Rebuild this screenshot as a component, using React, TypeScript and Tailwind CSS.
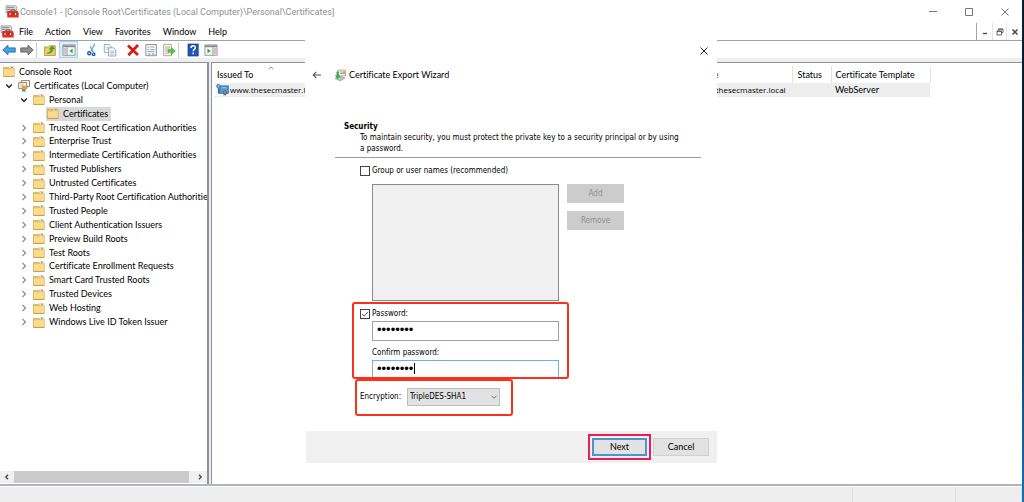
import React from "react";

const TREE = [
  "Trusted Root Certification Authorities",
  "Enterprise Trust",
  "Intermediate Certification Authorities",
  "Trusted Publishers",
  "Untrusted Certificates",
  "Third-Party Root Certification Authorities",
  "Trusted People",
  "Client Authentication Issuers",
  "Preview Build Roots",
  "Test Roots",
  "Certificate Enrollment Requests",
  "Smart Card Trusted Roots",
  "Trusted Devices",
  "Web Hosting",
  "Windows Live ID Token Issuer",
];

const MENUS = ["File", "Action", "View", "Favorites", "Window", "Help"];

function ConsoleIcon() {
  return (
    <svg viewBox="0 0 14 13" className="h-[13px] w-[14px] shrink-0" aria-hidden="true">
      <path d="M1 .8h9.500l1.200 1v6H1z" fill="#d9dcde" stroke="#8b8f93" strokeWidth=".7" />
      <path d="M2 2.600h7M2 4.600h3.500" stroke="#6f7478" strokeWidth=".8" />
      <path d="M6 6.200V4.900h4v1.300" fill="none" stroke="#5d2020" strokeWidth=".9" />
      <path d="M2.300 6h10.400l.9 2v4.600H2.300z" fill="#dd3023" />
      <path d="M2.300 8.900h11.300" stroke="#9a1d15" strokeWidth=".7" />
      <path d="M5.200 8.100v1.800M10.600 8.100v1.800" stroke="#fff" strokeWidth="1.100" />
    </svg>
  );
}

function FolderIcon() {
  return (
    <svg viewBox="0 0 12 11" className="h-[11px] w-[12px] shrink-0" aria-hidden="true">
      <path d="M.5 1.400h5l.8 1h4.900v8H.5z" fill="#e9bd58" stroke="#c99a3e" strokeWidth=".6" />
      <path d="M.9 3.200h5.200l.8-1h4v7.900H.9z" fill="#fbdc8b" />
      <path d="M6.600.5h3.600v2.200H6.600z" fill="#f7f3e6" stroke="#c99a3e" strokeWidth=".4" />
      <path d="M8 1h1.600v1.200H8z" fill="#5f9fd0" />
      <path d="M.5 10.400h10.800" stroke="#c4963c" strokeWidth=".8" />
    </svg>
  );
}

function CertsIcon() {
  return (
    <svg viewBox="0 0 12 12" className="h-[12px] w-[12px] shrink-0" aria-hidden="true">
      <path d="M3.500.6h8v6h-8z" fill="#fff" stroke="#8a7355" strokeWidth=".9" />
      <path d="M.7 2.600h8v6h-8z" fill="#fdfbf5" stroke="#8a7355" strokeWidth=".9" />
      <path d="M2 4.300h4M2 5.800h3" stroke="#b9b4a8" strokeWidth=".7" />
      <path d="M4.200 8.400v3.500l1.500-1 1.700 1V8.400z" fill="#2f7fcb" />
      <circle cx="5.800" cy="7.400" r="2.200" fill="#efa022" />
    </svg>
  );
}

function CertRowIcon() {
  return (
    <svg viewBox="0 0 13 12" className="h-[12px] w-[13px] shrink-0" aria-hidden="true">
      <path d="M3 1.800h9.400v7.600H3z" fill="#4d9ddb" stroke="#2d6c9f" strokeWidth=".8" />
      <path d="M5.400 3.800h5" stroke="#a6d4f4" strokeWidth=".8" />
      <circle cx="2.400" cy="2.200" r="1.800" fill="#7ec0ea" stroke="#35617f" strokeWidth=".8" />
      <path d="M2.400 4v5.400M2.400 6h1.600M2.400 8h1.600" stroke="#35617f" strokeWidth=".9" />
      <path d="M7.600 9.200v2.600l1.300-.8 1.300.8V9.200z" fill="#2f5f88" />
      <circle cx="8.900" cy="8.400" r="1.800" fill="#8d8a6a" stroke="#4b5a58" strokeWidth=".5" />
    </svg>
  );
}

function Chevron({ open }: { open?: boolean }) {
  return (
    <svg viewBox="0 0 8 8" className="h-2 w-2 shrink-0" fill="none" aria-hidden="true">
      {open ? (
        <path d="M1.200 2.600 4 5.400l2.800-2.800" stroke="#222" strokeWidth="1.400" />
      ) : (
        <path d="M2.500 1 5.500 4l-3 3" stroke="#8c8c8c" strokeWidth="1.200" />
      )}
    </svg>
  );
}

function ToolButton({ label, active, children }: { label: string; active?: boolean; children: React.ReactNode }) {
  return (
    <button
      type="button"
      aria-label={label}
      className={
        active
          ? "flex h-[17px] w-[19px] items-center justify-center border border-[#a3d5f5] bg-[#d9edfa]"
          : "flex h-[17px] w-[18px] items-center justify-center"
      }
    >
      <svg viewBox="0 0 14 14" className="h-[14px] w-[14px] shrink-0" fill="none" aria-hidden="true">
        {children}
      </svg>
    </button>
  );
}

function Separator() {
  return <span className="h-4 w-px bg-[#cfcfcf]" />;
}

function Toolbar() {
  return (
    <div className="flex h-[17px] shrink-0 items-center bg-white">
      <ToolButton label="Back">
        <path d="M.8 7 6 2.300v2.600h7.200v4.200H6v2.600z" fill="#40a4e8" stroke="#1b6fae" strokeWidth=".9" />
      </ToolButton>
      <ToolButton label="Forward">
        <path d="M13.200 7 8 2.300v2.600H.8v4.200H8v2.600z" fill="#8f8f8f" stroke="#5f5f5f" strokeWidth=".9" />
      </ToolButton>
      <Separator />
      <div className="flex items-center pl-1">
        <ToolButton label="Up one level">
          <path d="M1.500 4h4l1-1.200h5.800v9.700H1.500z" fill="#f0c96a" stroke="#b98d34" strokeWidth=".8" />
          <path d="M4 10.200c2.700-.3 3.900-2 3.900-4H6.200L9 2.800 11.600 6H9.800c0 3-2 4.600-5.800 4.200z" fill="#3cae2e" stroke="#22801a" strokeWidth=".4" />
        </ToolButton>
        <ToolButton label="Show console tree" active>
          <path d="M.9 1.900h12.200v10.400H.9z" fill="#f5f5f5" stroke="#85888c" strokeWidth=".8" />
          <path d="M1 3.300h12" stroke="#85888c" strokeWidth="1.800" />
          <path d="M1.600 6h2.600M1.600 8h2.600M1.600 10h2.600M5 4.500v7.800" stroke="#8d9094" strokeWidth=".9" />
          <path d="M10.600 5.700v4.600L7.400 8z" fill="#3a9c2e" />
        </ToolButton>
      </div>
      <div className="flex items-center pl-[5px]">
        <ToolButton label="Cut">
          <path d="M9.800.8 6 8.400M5 3l3.200 6" stroke="#6fa6d6" strokeWidth="1.300" />
          <circle cx="4.200" cy="10.300" r="1.500" stroke="#1d5fa5" strokeWidth="1.400" />
          <circle cx="8.600" cy="11.200" r="1.300" stroke="#1d5fa5" strokeWidth="1.400" />
        </ToolButton>
        <ToolButton label="Copy">
          <path d="M1.300 1.500h5l2 2v6h-7z" fill="#fff" stroke="#8d99a6" strokeWidth=".8" />
          <path d="M2.500 4.200h4M2.500 6h4" stroke="#9fb6cd" strokeWidth=".7" />
          <path d="M5.600 4.800h5l2.200 2.200v6H5.600z" fill="#fff" stroke="#7c8fa5" strokeWidth=".8" />
          <path d="M7 8h4.300M7 9.600h4.300M7 11.200h4.300" stroke="#7ea6cf" strokeWidth=".7" />
        </ToolButton>
      </div>
      <div className="flex items-center pl-[5px]">
        <ToolButton label="Delete">
          <path d="m2 2.600 10 9.400M12 2 2.400 12.200" stroke="#d31f16" strokeWidth="2.800" />
        </ToolButton>
        <ToolButton label="Properties">
          <path d="M1.800 1.500h10.600v11.200H1.800z" fill="#f6f6f6" stroke="#85888c" strokeWidth=".9" />
          <path d="M3.500 4h2M6.500 4h4M3.500 6.500h2M6.500 6.500h4M3.500 8.500h7" stroke="#8cabc8" strokeWidth="1" />
          <path d="M4 11h2.500M8 11h2.500" stroke="#777" strokeWidth=".9" />
        </ToolButton>
        <ToolButton label="Export list">
          <path d="M1.600 1.300h7.800v11.400H1.600z" fill="#fdfbe9" stroke="#9a9786" strokeWidth=".8" />
          <path d="M3 4h5M3 6h5M3 8h3M3 10.300h4" stroke="#999" strokeWidth=".8" />
          <path d="M6 6.800h3.400V4.600L13.400 8l-4 3.400V9.200H6z" fill="#5fc343" stroke="#359522" strokeWidth=".5" />
        </ToolButton>
      </div>
      <Separator />
      <div className="flex items-center pl-[5px]">
        <ToolButton label="Help">
          <rect x="2" y="1" width="10.200" height="12" fill="#2457b5" stroke="#173b80" strokeWidth=".7" />
          <path d="M5 5c0-3 4.400-2.900 4.400-.4C9.400 6.400 7.200 6.300 7.200 8.300M7.200 9.600v1.700" stroke="#fff" strokeWidth="1.400" />
        </ToolButton>
        <ToolButton label="Show action pane">
          <path d="M.9 1.900h12.200v10.400H.9z" fill="#f5f5f5" stroke="#85888c" strokeWidth=".8" />
          <path d="M1 3.300h12" stroke="#85888c" strokeWidth="1.800" />
          <path d="M10 6h2.400M10 8h2.400M10 10h2.400M9 4.500v7.800" stroke="#8d9094" strokeWidth=".9" />
          <path d="M3.500 5.700v4.600L6.700 8z" fill="#3a9c2e" />
        </ToolButton>
      </div>
    </div>
  );
}

function TitleBar() {
  return (
    <header className="flex h-[23px] shrink-0 items-center bg-white pl-[5px] pr-3">
      <ConsoleIcon />
      <h1 className="flex-1 whitespace-nowrap pl-px font-[Roboto,sans-serif] text-[9px] leading-3 text-[#8f8f8f]">
        Console1 - [Console Root\Certificates (Local Computer)\Personal\Certificates]
      </h1>
      <div className="flex items-center gap-[26px] text-[#777]">
        <button type="button" aria-label="Minimize" className="h-[10px] w-[10px]">
          <svg viewBox="0 0 10 10" className="h-full w-full" aria-hidden="true">
            <path d="M1 4.500h8" stroke="currentColor" />
          </svg>
        </button>
        <button type="button" aria-label="Maximize" className="h-[10px] w-[10px]">
          <svg viewBox="0 0 10 10" className="h-full w-full" aria-hidden="true">
            <path d="M1.500 1.500h7v7h-7z" fill="none" stroke="currentColor" />
          </svg>
        </button>
        <button type="button" aria-label="Close" className="h-[10px] w-[10px]">
          <svg viewBox="0 0 10 10" className="h-full w-full" aria-hidden="true">
            <path d="m1.500 1.500 7 7m0-7-7 7" stroke="currentColor" />
          </svg>
        </button>
      </div>
    </header>
  );
}

function MenuBar() {
  return (
    <div className="flex h-[18px] shrink-0 items-stretch border-b border-[#a3a3a3] bg-white">
      <nav className="flex flex-1 items-center">
        <ConsoleIcon />
        <div className="flex gap-3 pl-[5px] text-[9px] leading-3 text-black">
          {MENUS.map((m) => (
            <button key={m} type="button">
              {m}
            </button>
          ))}
        </div>
      </nav>
      <div className="flex border-l border-[#a3a3a3] text-[#445]">
        <button type="button" aria-label="Minimize child window" className="flex w-[15px] items-center justify-center">
          <svg viewBox="0 0 8 8" className="h-2 w-2" aria-hidden="true">
            <path d="M2 5.500h4" stroke="currentColor" strokeWidth="1.300" />
          </svg>
        </button>
        <button
          type="button"
          aria-label="Restore child window"
          className="flex w-[15px] items-center justify-center border-x border-[#e3e3e3]"
        >
          <svg viewBox="0 0 8 8" className="h-2 w-2" fill="none" aria-hidden="true">
            <path d="M2.500 2.500V1H7v3.500H5.500M1 3h4.500v4H1z" stroke="currentColor" strokeWidth=".8" />
            <path d="M2.500 1.300H7M1 3.400h4.500" stroke="currentColor" strokeWidth=".8" />
          </svg>
        </button>
        <button type="button" aria-label="Close child window" className="flex w-[15px] items-center justify-center">
          <svg viewBox="0 0 8 8" className="h-2 w-2" aria-hidden="true">
            <path d="m1.500 1.500 5 5m0-5-5 5" stroke="currentColor" strokeWidth="1.500" />
          </svg>
        </button>
      </div>
    </div>
  );
}

function TreePane() {
  return (
    <aside className="flex w-[209px] shrink-0 flex-col border-r-2 border-t border-[#8d939c] bg-white">
      <ul className="grid h-[266px] auto-rows-fr overflow-hidden whitespace-nowrap pt-[2px] text-[9px] leading-3 text-black">
        <li className="flex items-center gap-1 pl-[3px]">
          <FolderIcon />
          Console Root
        </li>
        <li className="flex items-center pl-[5px]">
          <Chevron open />
          <span className="flex items-center gap-1 pl-[5px]">
            <CertsIcon />
            Certificates (Local Computer)
          </span>
        </li>
        <li className="flex items-center pl-5">
          <Chevron open />
          <span className="flex items-center gap-1 pl-[5px]">
            <FolderIcon />
            Personal
          </span>
        </li>
        <li className="flex items-center pl-[46px]">
          <span className="flex items-center gap-1 bg-[#d9d9d9] pl-px pr-[3px]">
            <FolderIcon />
            <span className="leading-[14px]">Certificates</span>
          </span>
        </li>
        {TREE.map((name) => (
          <li key={name} className="flex items-center pl-5">
            <Chevron />
            <span className="flex items-center gap-1 pl-[5px]">
              <FolderIcon />
              {name}
            </span>
          </li>
        ))}
      </ul>
      <div className="mb-px mt-auto flex h-3 items-stretch bg-[#f0f0f0]">
        <button type="button" aria-label="Scroll left" className="flex w-[14px] items-center justify-center">
          <svg viewBox="0 0 8 8" className="h-2 w-2" fill="none" aria-hidden="true">
            <path d="M5 1.800 2.800 4 5 6.200" stroke="#444" strokeWidth="1.300" />
          </svg>
        </button>
        <span className="flex-1 bg-[#cbcbcb]" />
        <button type="button" aria-label="Scroll right" className="flex w-[18px] items-center justify-center pl-1">
          <svg viewBox="0 0 8 8" className="h-2 w-2" fill="none" aria-hidden="true">
            <path d="M3 1.800 5.200 4 3 6.200" stroke="#444" strokeWidth="1.300" />
          </svg>
        </button>
      </div>
    </aside>
  );
}

function ListPane() {
  return (
    <section className="min-w-0 flex-1 overflow-hidden border-l border-t border-[#8d939c] bg-white pl-px pt-[3px]">
      <table className="w-[717px] table-fixed border-collapse text-left text-[9px] leading-3 text-black">
        <colgroup>
          <col className="w-[115px]" />
          <col className="w-[358px]" />
          <col className="w-[106px]" />
          <col className="w-[39px]" />
          <col className="w-[99px]" />
        </colgroup>
        <thead>
          <tr className="h-[17px] whitespace-nowrap">
            <th className="relative px-1 pt-px font-normal">
              Issued To
              <svg viewBox="0 0 8 4" className="absolute left-1/2 top-0 h-1 w-2 -translate-x-1/2" fill="none" aria-hidden="true">
                <path d="M1.500 3.200 4 1l2.500 2.200" stroke="#777" strokeWidth=".8" />
              </svg>
            </th>
            <th />
            <th className="border-r border-[#e3e3e3] px-[9px] pt-px font-normal">Name</th>
            <th className="border-r border-[#e3e3e3] px-[5px] pt-px font-normal">Status</th>
            <th className="border-r border-[#e3e3e3] px-1 pt-px font-normal">Certificate Template</th>
          </tr>
        </thead>
        <tbody>
          <tr className="h-[14px] whitespace-nowrap bg-[#eee]">
            <td className="p-0">
              <span className="flex items-center">
                <span className="bg-white pl-[3px]">
                  <CertRowIcon />
                </span>
                <span className="pl-px font-['Open_Sans',sans-serif] text-[8px]">www.thesecmaster.local</span>
              </span>
            </td>
            <td />
            <td className="px-[9px] font-['Open_Sans',sans-serif] text-[8px]">www.thesecmaster.local</td>
            <td />
            <td className="px-1">WebServer</td>
          </tr>
        </tbody>
      </table>
    </section>
  );
}

function CheckBox({ id, label, checked }: { id: string; label: string; checked?: boolean }) {
  return (
    <div className="flex items-center gap-[2px]">
      <span className="relative h-[10px] w-[10px]">
        <input
          id={id}
          type="checkbox"
          defaultChecked={checked}
          className="peer block h-[10px] w-[10px] appearance-none border border-[#444] bg-white"
        />
        <svg
          viewBox="0 0 10 10"
          className="pointer-events-none absolute inset-0 hidden h-[10px] w-[10px] peer-checked:block"
          fill="none"
          aria-hidden="true"
        >
          <path d="m2 5 2 2.200 4-4.400" stroke="#444" strokeWidth=".9" />
        </svg>
      </span>
      <label htmlFor={id}>{label}</label>
    </div>
  );
}

function ExportWizard() {
  return (
    <div
      role="dialog"
      aria-labelledby="wizard-title"
      className="absolute left-[305px] top-10 flex w-[412px] flex-col bg-white text-black"
    >
      <div className="flex h-[22px] items-center justify-end pr-2">
        <button type="button" aria-label="Close wizard" className="h-[10px] w-[10px]">
          <svg viewBox="0 0 10 10" className="h-full w-full" aria-hidden="true">
            <path d="m1.500 1.500 7 7m0-7-7 7" stroke="#222" />
          </svg>
        </button>
      </div>
      <div className="flex h-[26px] items-center pl-[7px]">
        <button type="button" aria-label="Previous page" className="h-[10px] w-[10px]">
          <svg viewBox="0 0 10 10" className="h-full w-full" fill="none" aria-hidden="true">
            <path d="M9 5H1.200M4.300 1.900 1.200 5l3.100 3.100" stroke="#555" strokeWidth="1.100" />
          </svg>
        </button>
        <svg viewBox="0 0 13 13" className="ml-3 h-[13px] w-[13px]" aria-hidden="true">
          <path d="M4 1h7.500v6H4z" fill="#f2f3f4" stroke="#8b9096" strokeWidth=".7" />
          <path d="M6 3h4M6 4.500h4" stroke="#6b8fb8" strokeWidth=".7" />
          <path d="M1 9.500 7 7.500l4 1.500-5 3z" fill="#b9bec4" stroke="#7c828a" strokeWidth=".5" />
          <path d="M2.500 2.500h2.300v4h1.700L3.600 10 .8 6.500h1.700z" fill="#35b030" />
          <circle cx="10.200" cy="3.800" r="1.500" fill="#f0a726" />
        </svg>
        <h2 id="wizard-title" className="pl-[2px] text-[9px] leading-3">
          Certificate Export Wizard
        </h2>
      </div>
      <div className="flex flex-col pt-[33px] font-['DejaVu_Sans_Condensed','DejaVu_Sans',sans-serif] text-[8px] leading-[11px]">
        <div className="ml-[30px] mr-4 border-b border-[#9b9b9b] pb-[3px] pl-[9px]">
          <h3 className="font-bold">Security</h3>
          <p className="pl-4">
            To maintain security, you must protect the private key to a security principal or by using
            <br />a password.
          </p>
        </div>
        <form className="flex flex-col" onSubmit={(e) => e.preventDefault()}>
          <div className="pl-[55px] pt-[7px]">
            <CheckBox id="group" label="Group or user names (recommended)" />
            <div className="flex gap-2 pl-3 pt-2">
              <select
                multiple
                disabled
                aria-label="Group or user names"
                className="h-[117px] w-[187px] appearance-none border border-[#8a8a92] bg-[#f0f0f0]"
              />
              <div className="flex flex-col gap-2 text-[#8f8f8f]">
                <button type="button" disabled className="h-[19px] w-[57px] bg-[#cccccc]">
                  Add
                </button>
                <button type="button" disabled className="h-[19px] w-[57px] bg-[#cccccc]">
                  Remove
                </button>
              </div>
            </div>
          </div>
          <div className="relative ml-[47px] mt-px flex h-[77px] w-[217px] flex-col pl-2 pt-[6px]">
            <CheckBox id="use-password" label="Password:" checked />
            <input
              type="password"
              aria-label="Password"
              defaultValue="password"
              className="ml-3 mt-[2px] h-[20px] w-[187px] border border-[#a0a0a0] bg-white px-1 pb-1 font-['Liberation_Sans',sans-serif] text-[13px] leading-none"
            />
            <label htmlFor="confirm" className="ml-3 mt-[6px]">
              Confirm password:
            </label>
            <div className="relative ml-3 mt-[2px] w-[187px]">
              <input
                id="confirm"
                type="password"
                defaultValue="password"
                className="block h-[18px] w-full border border-[#6fb0e6] bg-white px-1 pb-px font-['Liberation_Sans',sans-serif] text-[13px] leading-none"
              />
              <span className="absolute left-[42px] top-[3px] h-[11px] w-px bg-black" />
            </div>
            <span className="pointer-events-none absolute inset-0 rounded-[3px] border-2 border-[#fa3019]" />
          </div>
          <div className="ml-[50px] flex h-[37px] w-[158px] items-center gap-[6px] rounded-[3px] border-2 border-[#fa3019] pb-[2px] pl-[3px]">
            <label htmlFor="encryption">Encryption:</label>
            <div className="relative">
              <select
                id="encryption"
                defaultValue="3des"
                className="block h-[18px] w-[93px] appearance-none border border-[#bdbdbd] bg-[#e2e2e2] pl-[2px]"
              >
                <option value="3des">TripleDES-SHA1</option>
                <option value="aes">AES256-SHA256</option>
              </select>
              <svg
                viewBox="0 0 8 8"
                className="pointer-events-none absolute right-[2px] top-[5px] h-2 w-2"
                fill="none"
                aria-hidden="true"
              >
                <path d="M1.500 2.800 4 5.300l2.500-2.500" stroke="#666" strokeWidth=".9" />
              </svg>
            </div>
          </div>
        </form>
      </div>
      <footer className="ml-px mt-[15px] flex h-8 items-center justify-end gap-[2px] bg-[#f0f0f0] pr-2 text-[9px] leading-3">
        <div className="border-2 border-[#f0195a] p-[2px]">
          <button type="button" className="block h-[18px] w-[55px] border-2 border-[#4a94d0] bg-[#e2e2e2]">
            Next
          </button>
        </div>
        <button type="button" className="h-[18px] w-[56px] border border-[#d0d0d0] bg-[#e2e2e2]">
          Cancel
        </button>
      </footer>
    </div>
  );
}

export default function App() {
  return (
    <div className="relative flex h-screen bg-white font-[Lato,'Noto_Sans',sans-serif] [font-variant-ligatures:none]">
      <div className="flex min-w-0 flex-1 flex-col">
        <TitleBar />
        <MenuBar />
        <Toolbar />
        <main className="flex min-h-0 flex-1 gap-[2px] bg-[#eee] pt-1">
          <TreePane />
          <ListPane />
        </main>
        <footer className="flex h-[18px] shrink-0 justify-end border-t-2 border-[#b0b4bd] bg-[#eee]">
          <div className="flex flex-1 justify-end border-t border-white">
            <span className="w-[103px] border-l border-[#dedede]" />
            <span className="w-[67px] border-x border-[#dedede]" />
          </div>
        </footer>
      </div>
      <div className="w-[2px] shrink-0 bg-linear-to-b from-[#0b1b33] from-40% to-[#0a74bd]" />
      <ExportWizard />
    </div>
  );
}
